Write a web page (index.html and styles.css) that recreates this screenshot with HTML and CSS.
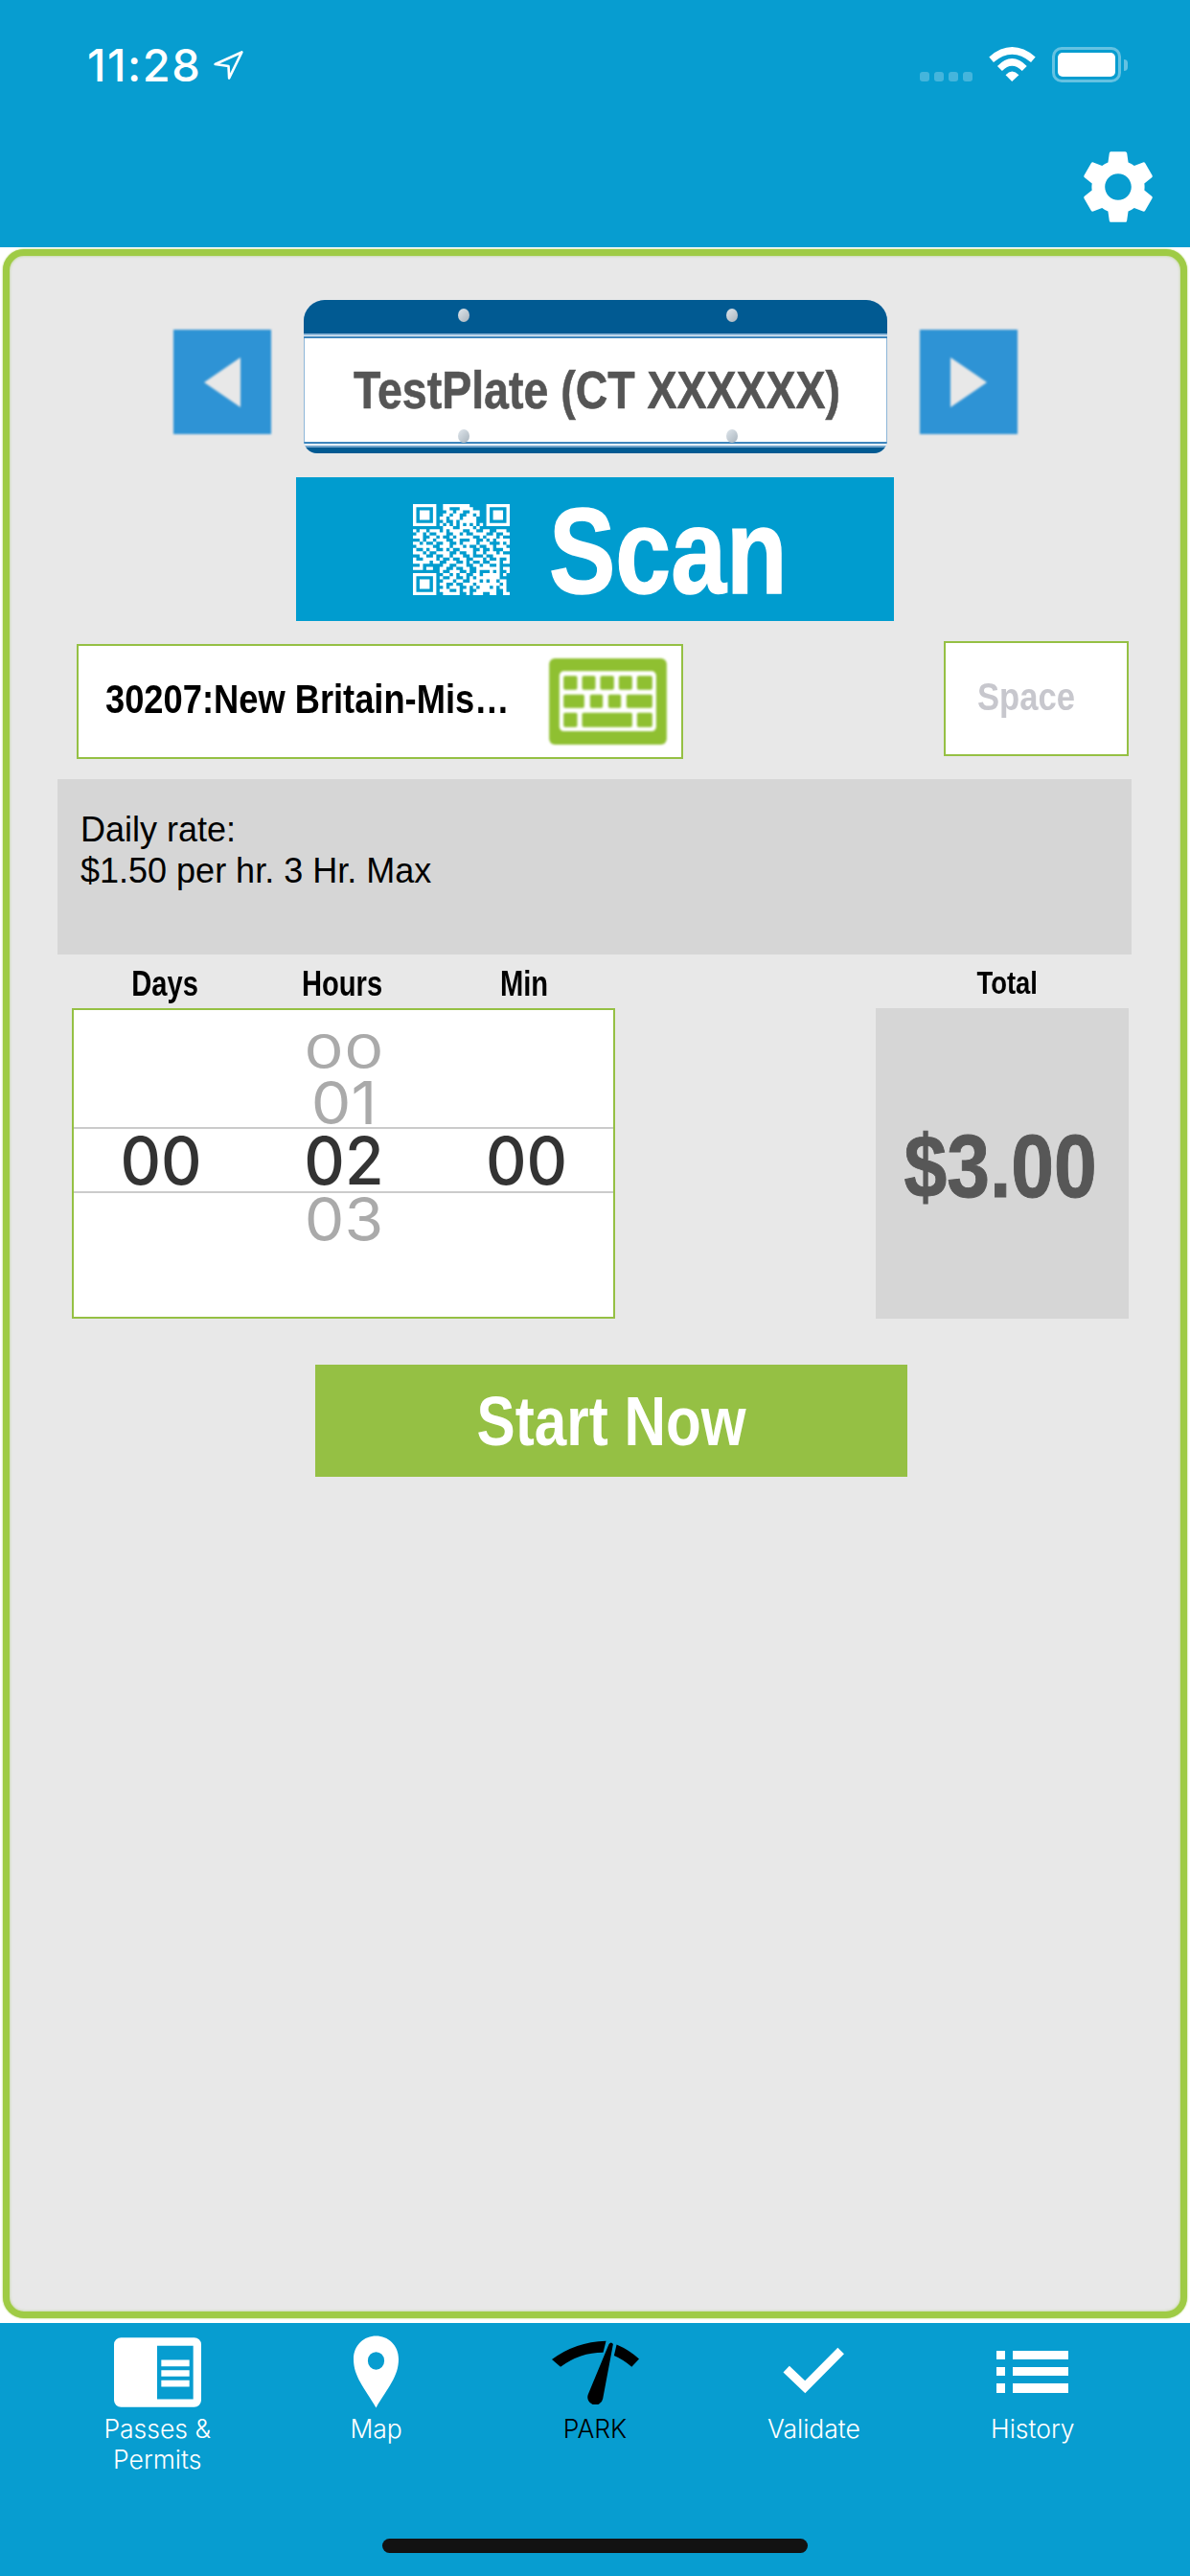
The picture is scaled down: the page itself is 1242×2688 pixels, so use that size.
FILE: index.html
```html
<!DOCTYPE html>
<html lang="en">
<head>
<meta charset="utf-8">
<title>Park</title>
<link rel="stylesheet" href="styles.css">
</head>
<body>
<div class="app">
  <header class="header">
    <div class="status">
      <div class="status-left">
        <span class="time">11:28</span>
        <svg class="loc" viewBox="483 37 94 90"><path d="M488 79 L572 41 L532 123 L530 85 Z" fill="none" stroke="#fff" stroke-width="8" stroke-linejoin="round"/></svg>
      </div>
      <div class="status-right">
        <div class="dots"><i></i><i></i><i></i><i></i></div>
        <svg class="wifi" viewBox="245 57 148 108"><path fill="#fff" d="M246 88 Q318 26 392 88 L378 105 Q318 55 260 105 Z M272 117 Q318 69 365 117 L350 132 Q318 100 287 132 Z M298 145 Q318 123 340 145 L318 165 Z"/></svg>
        <div class="battery"><div class="battery-shell"><div class="battery-fill"></div></div><div class="battery-tip"></div></div>
      </div>
    </div>
    <div class="actions">
      <svg class="gear" viewBox="0 0 24 24"><path fill="#fff" d="M19.14 12.94c.04-.3.06-.61.06-.94 0-.32-.02-.64-.07-.94l2.03-1.58a.49.49 0 0 0 .12-.61l-1.92-3.32a.488.488 0 0 0-.59-.22l-2.39.96c-.5-.38-1.03-.7-1.62-.94l-.36-2.54a.484.484 0 0 0-.48-.41h-3.84c-.24 0-.43.17-.47.41l-.36 2.54c-.59.24-1.13.57-1.62.94l-2.39-.96c-.22-.08-.47 0-.59.22L2.74 8.87c-.12.21-.08.47.12.61l2.03 1.58c-.05.3-.09.63-.09.94s.02.64.07.94l-2.03 1.58a.49.49 0 0 0-.12.61l1.92 3.32c.12.22.37.29.59.22l2.39-.96c.5.38 1.03.7 1.62.94l.36 2.54c.05.24.24.41.48.41h3.84c.24 0 .44-.17.47-.41l.36-2.54c.59-.24 1.13-.56 1.62-.94l2.39.96c.22.08.47 0 .59-.22l1.92-3.32c.12-.22.07-.47-.12-.61l-2.01-1.58zM12 15.6c-1.98 0-3.6-1.62-3.6-3.6s1.62-3.6 3.6-3.6 3.6 1.62 3.6 3.6-1.62 3.6-3.6 3.6z"/></svg>
    </div>
  </header>

  <main class="main">
    <div class="panel">
      <div class="plate-row">
        <div class="arrow">
          <svg viewBox="0 0 38 52" class="arrow-tri"><path d="M38 0V52L0 26Z" fill="#e8e8e8"/></svg>
        </div>
        <div class="plate">
          <div class="plate-band"></div>
          <div class="plate-lines"></div>
          <div class="plate-body"><span class="plate-text">TestPlate (CT XXXXXX)</span></div>
          <div class="plate-lines plate-lines-low"></div>
          <div class="plate-foot"></div>
          <i class="bolt bolt-tl"></i><i class="bolt bolt-tr"></i><i class="bolt bolt-bl"></i><i class="bolt bolt-br"></i>
        </div>
        <div class="arrow">
          <svg viewBox="0 0 38 52" class="arrow-tri"><path d="M0 0V52L38 26Z" fill="#e8e8e8"/></svg>
        </div>
      </div>

      <div class="scan">
        <svg class="qr" viewBox="0 0 29 29" preserveAspectRatio="none"><path fill="none" stroke="#fff" stroke-width="1" d="M0 .5h7M9 .5h8M22 .5h7M0 1.5h1M6 1.5h1M9 1.5h2M14 1.5h4M22 1.5h1M28 1.5h1M0 2.5h1M2 2.5h3M6 2.5h1M10 2.5h2M13 2.5h2M17 2.5h3M22 2.5h1M24 2.5h3M28 2.5h1M0 3.5h1M2 3.5h3M6 3.5h1M9 3.5h2M12 3.5h2M16 3.5h2M19 3.5h1M22 3.5h1M24 3.5h3M28 3.5h1M0 4.5h1M2 4.5h3M6 4.5h1M8 4.5h2M11 4.5h3M15 4.5h4M22 4.5h1M24 4.5h3M28 4.5h1M0 5.5h1M6 5.5h1M9 5.5h1M12 5.5h1M14 5.5h5M22 5.5h1M28 5.5h1M0 6.5h7M8 6.5h1M10 6.5h1M12 6.5h1M14 6.5h1M16 6.5h1M18 6.5h1M20 6.5h1M22 6.5h7M9 7.5h3M14 7.5h4M19 7.5h1M0 8.5h1M2 8.5h2M5 8.5h3M9 8.5h1M11 8.5h4M17 8.5h2M21 8.5h2M25 8.5h3M1 9.5h2M4 9.5h1M7 9.5h3M12 9.5h2M15 9.5h1M18 9.5h4M24 9.5h1M27 9.5h2M0 10.5h3M5 10.5h2M8 10.5h1M11 10.5h1M13 10.5h5M20 10.5h1M22 10.5h3M26 10.5h1M2 11.5h1M4 11.5h2M7 11.5h3M12 11.5h2M17 11.5h2M21 11.5h1M23 11.5h1M25 11.5h4M0 12.5h2M3 12.5h1M6 12.5h1M9 12.5h2M13 12.5h1M15 12.5h4M20 12.5h3M26 12.5h1M28 12.5h1M1 13.5h5M8 13.5h3M12 13.5h3M16 13.5h1M19 13.5h1M22 13.5h2M25 13.5h3M0 14.5h1M3 14.5h1M5 14.5h2M9 14.5h1M11 14.5h1M14 14.5h4M20 14.5h1M23 14.5h1M27 14.5h2M0 15.5h3M4 15.5h1M7 15.5h4M13 15.5h1M16 15.5h2M19 15.5h2M22 15.5h3M26 15.5h1M2 16.5h2M6 16.5h1M9 16.5h2M12 16.5h3M17 16.5h1M21 16.5h1M24 16.5h5M0 17.5h1M3 17.5h4M8 17.5h1M11 17.5h1M14 17.5h2M18 17.5h3M22 17.5h1M25 17.5h1M28 17.5h1M0 18.5h5M6 18.5h2M10 18.5h3M15 18.5h1M17 18.5h1M20 18.5h1M23 18.5h3M27 18.5h2M2 19.5h1M9 19.5h2M13 19.5h3M18 19.5h2M21 19.5h2M25 19.5h1M0 20.5h3M4 20.5h2M8 20.5h2M12 20.5h1M15 20.5h2M19 20.5h1M20 20.5h6M27 20.5h2M8 21.5h1M11 21.5h3M16 21.5h1M19 21.5h1M23 21.5h1M25 21.5h1M28 21.5h1M0 22.5h7M9 22.5h2M12 22.5h1M14 22.5h2M18 22.5h2M21 22.5h5M27 22.5h1M0 23.5h1M6 23.5h1M8 23.5h1M11 23.5h2M15 23.5h1M17 23.5h1M19 23.5h7M0 24.5h1M2 24.5h3M6 24.5h1M9 24.5h3M13 24.5h2M17 24.5h3M21 24.5h1M23 24.5h2M26 24.5h2M0 25.5h1M2 25.5h3M6 25.5h1M8 25.5h2M12 25.5h1M15 25.5h3M19 25.5h7M27 25.5h1M0 26.5h1M2 26.5h3M6 26.5h1M9 26.5h1M11 26.5h3M16 26.5h1M18 26.5h1M20 26.5h3M24 26.5h1M26 26.5h2M0 27.5h1M6 27.5h1M8 27.5h3M13 27.5h1M15 27.5h2M19 27.5h6M27 27.5h1M0 28.5h7M9 28.5h5M16 28.5h1M18 28.5h3M23 28.5h2M27 28.5h2"/></svg>
        <span class="scan-text">Scan</span>
      </div>

      <div class="field-row">
        <div class="field">
          <span class="field-text">30207:New Britain-Mis…</span>
          <svg class="keyboard" viewBox="40 50 368 270">
            <rect x="40" y="50" width="368" height="270" rx="18" fill="#8fc031"/>
            <rect x="72" y="90" width="303" height="188" rx="14" fill="#fff"/>
            <g fill="#8fc031">
              <rect x="85" y="105" width="43" height="43" rx="5"/><rect x="143" y="105" width="42" height="43" rx="5"/><rect x="200" y="105" width="43" height="43" rx="5"/><rect x="258" y="105" width="42" height="43" rx="5"/><rect x="315" y="105" width="48" height="43" rx="5"/>
              <rect x="85" y="163" width="65" height="42" rx="5"/><rect x="168" y="163" width="40" height="42" rx="5"/><rect x="225" y="163" width="40" height="42" rx="5"/><rect x="282" y="163" width="81" height="42" rx="5"/>
              <rect x="85" y="220" width="43" height="45" rx="5"/><rect x="143" y="220" width="157" height="45" rx="5"/><rect x="315" y="220" width="48" height="45" rx="5"/>
            </g>
          </svg>
        </div>
        <div class="space"><span class="space-text">Space</span></div>
      </div>

      <div class="rate">Daily rate:<br>$1.50 per hr. 3 Hr. Max</div>

      <div class="calc">
        <div class="wheel-col">
          <div class="labels">
            <div class="label"><span class="label-text">Days</span></div>
            <div class="label"><span class="label-text">Hours</span></div>
            <div class="label"><span class="label-text">Min</span></div>
          </div>
          <div class="picker">
            <div class="digit far hours">00</div>
            <div class="digit near hours">01</div>
            <div class="selected">
              <div class="digit current">00</div>
              <div class="digit current">02</div>
              <div class="digit current">00</div>
            </div>
            <div class="digit after hours">03</div>
          </div>
        </div>
        <div class="total-col">
          <div class="total-label"><span class="total-label-text">Total</span></div>
          <div class="total"><span class="total-text">$3.00</span></div>
        </div>
      </div>

      <button class="start"><span class="start-text">Start Now</span></button>
    </div>
  </main>

  <footer class="tabbar">
    <nav class="tabs">
      <div class="tab">
        <div class="tab-icon"><svg class="i-passes" viewBox="87 42 273 218"><path fill="#fff" fill-rule="evenodd" d="M109 42H338A22 22 0 0 1 360 64V238A22 22 0 0 1 338 260H109A22 22 0 0 1 87 238V64A22 22 0 0 1 109 42ZM222 68V235H335V68ZM235 112V132H323V112ZM235 144V164H323V144ZM235 176V196H323V176Z"/></svg></div>
        <span class="tab-label">Passes &amp; Permits</span>
      </div>
      <div class="tab">
        <div class="tab-icon"><svg class="i-pin" viewBox="836 37 142 226"><path fill="#fff" fill-rule="evenodd" d="M907 263C870 200 836 165 836 110C836 65 870 37 907 37C944 37 978 65 978 110C978 165 944 200 907 263ZM907 87A26 28 0 1 0 907 143A26 28 0 1 0 907 87Z"/></svg></div>
        <span class="tab-label">Map</span>
      </div>
      <div class="tab tab-active">
        <div class="tab-icon"><svg class="i-gauge" viewBox="78 50 272 200"><path fill="#000" d="M78 110Q150 55 247 52L238 88Q165 88 105 133ZM280 63Q320 80 350 108L327 133Q300 110 272 98ZM256 62Q263 52 269 62L237 232A24 24 0 1 1 191 219Z"/></svg></div>
        <span class="tab-label">PARK</span>
      </div>
      <div class="tab">
        <div class="tab-icon"><svg class="i-check" viewBox="800 60 200 163"><path fill="none" stroke="#fff" stroke-width="28" d="M813 133L872 189L985 75"/></svg></div>
        <span class="tab-label">Validate</span>
      </div>
      <div class="tab">
        <div class="tab-icon"><svg class="i-list" viewBox="0 0 75 44"><path fill="#fff" d="M0 0H9V9H0ZM17 0H75V9H17ZM0 17H9V26H0ZM17 17H75V26H17ZM0 34H9V44H0ZM17 34H75V44H17Z"/></svg></div>
        <span class="tab-label">History</span>
      </div>
    </nav>
    <div class="home"></div>
  </footer>
</div>
</body>
</html>
```
FILE: styles.css
```css
* { box-sizing: border-box; }
html, body { margin: 0; padding: 0; }
body { background: #fff; font-family: "Liberation Sans", Arial, sans-serif; }
.app { width: 1242px; height: 2688px; display: flex; flex-direction: column; overflow: hidden; }

/* header */
.header { height: 258px; background: #079dd0; flex: none; padding-top: 49px; }
.status { height: 37px; display: flex; justify-content: space-between; align-items: flex-start; padding: 0 65px 0 91px; }
.status-left { display: flex; align-items: center; gap: 13px; height: 37px; }
.time { font-family: Inter, sans-serif; font-weight: 500; font-size: 47px; line-height: 37px; color: #fff; letter-spacing: 1.5px; }
.loc { width: 31px; height: 30px; }
.status-right { display: flex; align-items: flex-start; gap: 17px; }
.dots { display: flex; gap: 5px; margin-top: 26px; }
.dots i { display: block; width: 10px; height: 10px; border-radius: 3px; background: rgba(255,255,255,.25); }
.wifi { width: 49px; height: 36px; display: block; }
.battery { display: flex; align-items: center; height: 37px; }
.battery-shell { width: 72px; height: 37px; border: 3px solid rgba(255,255,255,.38); border-radius: 10px; padding: 3px; }
.battery-fill { width: 100%; height: 100%; background: #fff; border-radius: 5px; }
.battery-tip { width: 4px; height: 12px; margin-left: 3px; background: rgba(255,255,255,.38); border-radius: 0 6px 6px 0; }
.actions { display: flex; justify-content: flex-end; padding: 63px 29px 0 0; }
.gear { width: 92px; height: 92px; display: block; }

/* main */
.main { flex: 1; background: #fff; padding: 2px 3px 5px; display: flex; }
.panel { flex: 1; background: #e8e8e8; border: 7px solid #9fcb45; border-radius: 22px; padding-top: 46px; box-shadow: 0 0 2px #9fcb45, inset 0 0 3px rgba(143,190,60,.6); }

.plate-row { display: flex; justify-content: center; align-items: flex-start; gap: 34px; }
.arrow { width: 102px; height: 109px; margin-top: 31px; background: #2e93d5; display: flex; align-items: center; justify-content: center; filter: blur(1px); }
.arrow-tri { width: 38px; height: 52px; display: block; }

.plate { position: relative; width: 609px; height: 160px; border-radius: 22px 22px 14px 14px; overflow: hidden; display: flex; flex-direction: column; background: #fff; box-shadow: inset 0 0 0 1px #8db6d8; }
.plate-band { height: 35px; background: #015a92; flex: none; }
.plate-lines { height: 5px; flex: none; background: linear-gradient(#8db6d8 0 2px, #e6f0f7 2px 3px, #3f86bd 3px 5px); }
.plate-lines-low { height: 6px; background: linear-gradient(#3f86bd 0 2px, #e6f0f7 2px 4px, #6fa3cb 4px 6px); }
.plate-body { flex: 1; display: flex; align-items: center; justify-content: center; }
.plate-text { display: inline-block; font-weight: 700; font-size: 56px; line-height: 62px; color: #555; white-space: nowrap; transform: scaleX(.83); margin: -1px 0 0 3px; -webkit-text-stroke: .6px #555; }
.plate-foot { height: 6px; background: #015a92; flex: none; }
.bolt { position: absolute; width: 12px; height: 14px; border-radius: 50%; background: linear-gradient(135deg, #dfe6ec, #a9b4bd); }
.bolt-tl { left: 161px; top: 9px; }
.bolt-tr { left: 441px; top: 9px; }
.bolt-bl { left: 161px; top: 135px; }
.bolt-br { left: 441px; top: 135px; }

.scan { width: 624px; height: 150px; margin: 25px auto 0; padding-left: 5px; background: #009ccf; display: flex; align-items: center; justify-content: center; gap: 41px; color: #fff; }
.qr { width: 101px; height: 95px; display: block; margin-top: 1px; }
.scan-text { display: block; width: 244px; font-weight: 700; font-size: 126px; line-height: 130px; white-space: nowrap; transform: scaleX(.825); transform-origin: left center; margin-top: 5px; -webkit-text-stroke: 1.5px #fff; }

.field-row { display: flex; justify-content: space-between; align-items: flex-start; padding: 0 54px 0 70px; margin-top: 21px; }
.field { width: 633px; height: 120px; margin-top: 3px; background: #fff; border: 2px solid #95c044; display: flex; align-items: center; justify-content: space-between; padding: 0 15px 0 28px; }
.field-text { display: block; width: 421px; font-weight: 700; font-size: 42px; color: #000; white-space: nowrap; transform: scaleX(.864); transform-origin: left center; margin-top: -4px; }
.keyboard { width: 123px; height: 90px; display: block; filter: blur(.8px); }
.space { width: 193px; height: 120px; background: #fff; border: 2px solid #95c044; display: flex; align-items: center; padding: 0 0 0 33px; }
.space-text { display: block; font-weight: 700; font-size: 40px; color: #c7c7cd; transform: scaleX(.865); transform-origin: left center; margin-top: -4px; }

.rate { width: 1121px; height: 183px; margin: 21px 0 0 50px; background: #d6d6d6; padding: 31px 0 0 24px; font-size: 36px; line-height: 43px; color: #000; }

.calc { display: flex; justify-content: space-between; padding: 0 54px 0 65px; }
.wheel-col { width: 567px; }
.labels { height: 56px; padding-top: 14px; display: grid; grid-template-columns: 194px 176px 204px; }
.label { text-align: center; }
.label-text { display: inline-block; font-weight: 700; font-size: 36px; line-height: 34px; color: #000; transform: scaleX(.81); }
.picker { height: 324px; background: #fff; border: 2px solid #95c044; padding-top: 17px; display: grid; grid-template-columns: 182px 200px 181px; grid-template-rows: 52px 53px 69px 54px; }
.selected { grid-column: 1 / -1; display: grid; grid-template-columns: 182px 200px 181px; border-top: 2px solid #cbcbcb; border-bottom: 2px solid #cbcbcb; }
.digit { font-family: Inter, sans-serif; font-size: 66px; line-height: 50px; font-weight: 400; display: flex; align-items: center; justify-content: center; color: #aaa; }
.hours { grid-column: 2; }
.far { transform: scaleY(.75); }
.near { transform: scaleY(.94); }
.after { transform: scaleY(.96); }
.current { color: #333; font-weight: 500; transform: scaleY(1.04); }

.total-col { width: 264px; }
.total-label { height: 56px; padding: 14px 0 0 10px; text-align: center; }
.total-label-text { display: inline-block; font-weight: 700; font-size: 33px; line-height: 32px; color: #000; transform: scaleX(.83); }
.total { height: 324px; background: #d6d6d6; display: flex; align-items: center; justify-content: center; }
.total-text { display: inline-block; font-weight: 700; font-size: 92px; color: #575757; transform: scaleX(.874); margin-left: -3px; margin-top: 6px; -webkit-text-stroke: 1px #575757; }

.start { display: flex; align-items: center; justify-content: center; width: 618px; height: 117px; margin: 48px 0 0 319px; padding: 0; border: 0; background: #95c044; color: #fff; font-family: "Liberation Sans", Arial, sans-serif; }
.start-text { display: inline-block; font-weight: 700; font-size: 72px; transform: scaleX(.836); white-space: nowrap; }

/* tab bar */
.tabbar { height: 264px; flex: none; background: #079dd0; padding-top: 13px; }
.tabs { height: 212px; display: flex; padding: 0 50px; }
.tab { flex: 1 1 0; min-width: 0; display: flex; flex-direction: column; align-items: center; }
.tab-icon { height: 76px; display: flex; align-items: center; justify-content: center; flex: none; margin-bottom: 5px; }
.tab-icon svg { display: block; }
.i-passes { width: 91px; height: 73px; }
.i-pin { width: 47px; height: 76px; }
.i-gauge { width: 91px; height: 67px; }
.i-check { width: 67px; height: 54px; }
.i-list { width: 75px; height: 44px; }
.tab-label { width: 170px; text-align: center; font-family: Inter, sans-serif; font-size: 26.5px; font-weight: 350; line-height: 32px; color: #fff; }
.tab-active .tab-label { color: #000; }
.home { width: 444px; height: 15px; margin: 0 auto; background: #121212; border-radius: 8px; }
```
